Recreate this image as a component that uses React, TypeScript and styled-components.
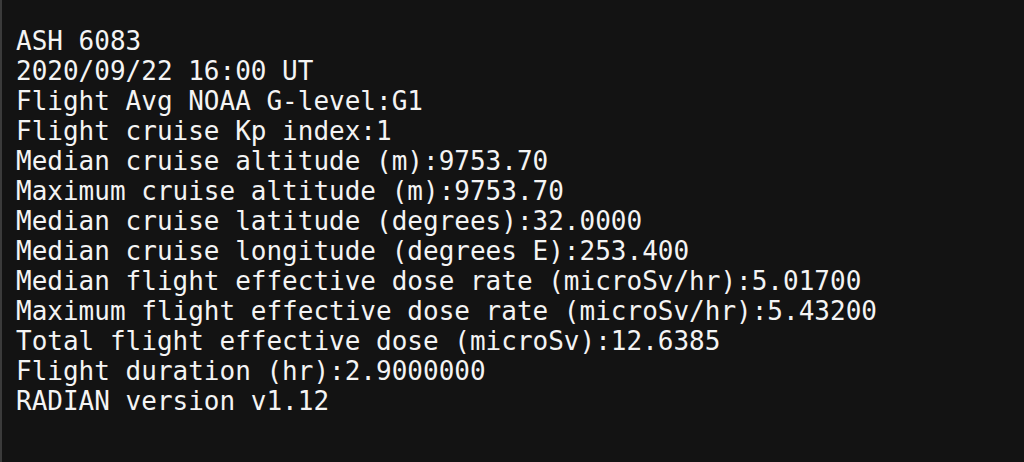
import React from "react";
import styled, { createGlobalStyle } from "styled-components";

const Global = createGlobalStyle`
  html, body { margin: 0; padding: 0; background: #131313; }
  body { overflow: hidden; }
`;

const Screen = styled.div`
  box-sizing: border-box;
  width: 1024px;
  height: 462px;
  background: #131313;
  border-left: 2px solid #3b3b3b;
  padding: 26px 0 0 14px;
`;

const Output = styled.pre`
  margin: 0;
  font-family: "DejaVu Sans Mono", monospace;
  font-size: 26px;
  line-height: 30px;
  color: #f4f4f4;
  white-space: pre;
`;

const lines = [
  "ASH 6083",
  "2020/09/22 16:00 UT",
  "Flight Avg NOAA G-level:G1",
  "Flight cruise Kp index:1",
  "Median cruise altitude (m):9753.70",
  "Maximum cruise altitude (m):9753.70",
  "Median cruise latitude (degrees):32.0000",
  "Median cruise longitude (degrees E):253.400",
  "Median flight effective dose rate (microSv/hr):5.01700",
  "Maximum flight effective dose rate (microSv/hr):5.43200",
  "Total flight effective dose (microSv):12.6385",
  "Flight duration (hr):2.9000000",
  "RADIAN version v1.12",
];

export default function App() {
  return (
    <>
      <Global />
      <Screen>
        <Output>{lines.join("\n")}</Output>
      </Screen>
    </>
  );
}
